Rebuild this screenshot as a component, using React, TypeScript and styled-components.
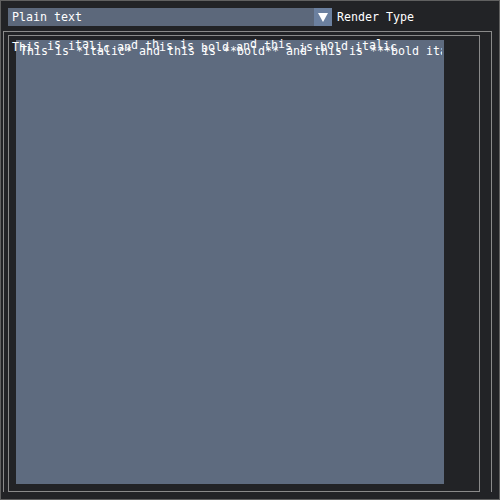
import React from 'react';
import styled, { createGlobalStyle } from 'styled-components';

const GlobalStyle = createGlobalStyle`
  html, body {
    margin: 0;
    padding: 0;
    background: #222326;
  }
`;

const Window = styled.div`
  width: 500px;
  height: 500px;
  box-sizing: border-box;
  border: 1px solid #606060;
  background: #222326;
  display: flex;
  flex-direction: column;
  overflow: hidden;
  font-family: 'DejaVu Sans Mono', 'Liberation Mono', monospace;
  font-size: 11.63px;
  color: #ffffff;
`;

const TopRow = styled.div`
  display: flex;
  align-items: center;
  gap: 5px;
  height: 18px;
  margin: 7px 0 0 7px;
`;

const Combo = styled.div`
  display: flex;
  width: 324px;
  height: 18px;
  background: #5c687b;
`;

const ComboValue = styled.div`
  flex: 1;
  padding-left: 4px;
  line-height: 18px;
  white-space: pre;
`;

const ArrowButton = styled.div`
  width: 18px;
  height: 18px;
  background: #6b809f;
  display: flex;
  align-items: center;
  justify-content: center;
`;

const Label = styled.span`
  line-height: 18px;
  white-space: pre;
`;

const OuterFrame = styled.div`
  margin: 5px 0 0 2px;
  width: 489px;
  height: 461px;
  box-sizing: border-box;
  border: 1px solid #8a8a8a;
  border-bottom: none;
  padding: 3px 0 0 4px;
`;

const InnerFrame = styled.div`
  position: relative;
  width: 472px;
  height: 457px;
  box-sizing: border-box;
  border: 1px solid #8a8a8a;
  padding: 4px 0 0 7px;
`;

const TextArea = styled.div`
  width: 428px;
  height: 444px;
  background: #5e6b7f;
  padding: 5px 0 0 4px;
  box-sizing: border-box;
`;

const Source = styled.div`
  width: 422px;
  overflow: hidden;
  white-space: pre;
  line-height: 13px;
`;

const Rendered = styled.div`
  position: absolute;
  left: 3px;
  top: 5px;
  white-space: pre;
  line-height: 13px;
`;

const Glyph = styled.span<{ $dy: number }>`
  position: relative;
  top: ${p => p.$dy}px;
`;

const rendered = 'This is italic and this is bold and this is bold italic';
const offsets = [0, 0, 0, -2, 0, -1, -3, 0, -1, -2, -3, -1, 0, 1];

export default function App() {
  return (
    <>
      <GlobalStyle />
      <Window>
        <TopRow>
          <Combo>
            <ComboValue>Plain text</ComboValue>
            <ArrowButton>
              <svg width="10" height="9" viewBox="0 0 10 9">
                <polygon points="0,0 10,0 5,9" fill="#ffffff" />
              </svg>
            </ArrowButton>
          </Combo>
          <Label>Render Type</Label>
        </TopRow>
        <OuterFrame>
          <InnerFrame>
            <TextArea>
              <Source>This is *italic* and this is **bold** and this is ***bold italic***</Source>
            </TextArea>
            <Rendered>
              {rendered.split('').map((ch, i) => (
                <Glyph key={i} $dy={offsets[i % offsets.length]}>{ch}</Glyph>
              ))}
            </Rendered>
          </InnerFrame>
        </OuterFrame>
      </Window>
    </>
  );
}
